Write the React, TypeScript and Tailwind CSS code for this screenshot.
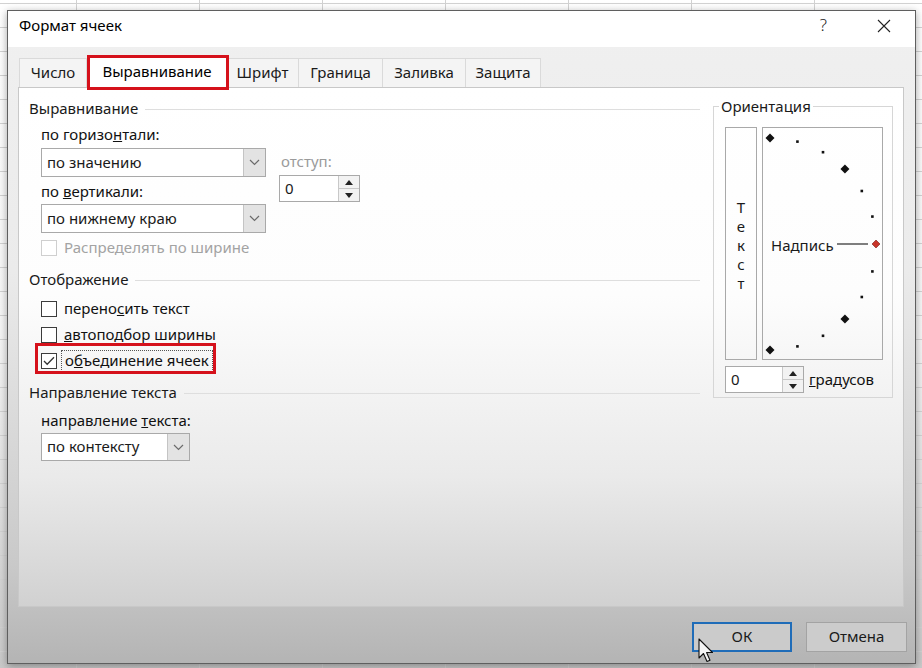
import React from "react";

function Chevron() {
  return (
    <svg width="11" height="7" viewBox="0 0 11 7">
      <polyline points="1,1 5.5,5.5 10,1" fill="none" stroke="#6b6b6b" strokeWidth="1.2" />
    </svg>
  );
}

function Select({ className, text }: { className: string; text: string }) {
  return (
    <div className={"flex border border-[#a9a9a9] bg-white " + className}>
      <div className="flex-1 flex items-center pl-[5px] pb-[2px] text-[#1a1a1a]">{text}</div>
      <div className="w-[22px] flex items-center justify-center bg-[#e3e3e3] border-l border-[#c4c4c4]">
        <Chevron />
      </div>
    </div>
  );
}

function Spin({ className }: { className: string }) {
  return (
    <div className={"flex border border-[#a9a9a9] bg-white " + className}>
      <div className="flex-1 flex items-center pl-[5px] pb-[2px] text-[#1a1a1a]">0</div>
      <div className="w-[21px] flex flex-col border-l border-[#c8c8c8] bg-[#f2f2f2]">
        <div className="flex-1 flex items-center justify-center border-b border-[#c8c8c8]">
          <svg width="8" height="5" viewBox="0 0 8 5">
            <polygon points="0,5 4,0 8,5" fill="#222" />
          </svg>
        </div>
        <div className="flex-1 flex items-center justify-center">
          <svg width="8" height="5" viewBox="0 0 8 5">
            <polygon points="0,0 8,0 4,5" fill="#222" />
          </svg>
        </div>
      </div>
    </div>
  );
}

function Header({ children }: { children: React.ReactNode }) {
  return (
    <div className="flex items-center h-[20px] text-[#1a1a1a]">
      <span className="-mt-[3px]">{children}</span>
      <div className="flex-1 h-px bg-[#dedede] ml-[7px]" />
    </div>
  );
}

function Check({ checked, disabled }: { checked?: boolean; disabled?: boolean }) {
  return (
    <div
      className={
        "w-[16px] h-[16px] border bg-white flex items-center justify-center shrink-0 " +
        (disabled ? "border-[#cfcfcf]" : "border-[#3c3c3c]")
      }
    >
      {checked && (
        <svg width="12" height="10" viewBox="0 0 12 10">
          <polyline points="1,5 4.2,8.3 11,1.2" fill="none" stroke="#333" strokeWidth="1.3" />
        </svg>
      )}
    </div>
  );
}

function Dial() {
  const cx = 7;
  const cy = 116;
  const r = 106;
  const items: { a: number; kind: "d" | "p" | "r" }[] = [
    { a: 90, kind: "d" },
    { a: 75, kind: "p" },
    { a: 60, kind: "p" },
    { a: 45, kind: "d" },
    { a: 30, kind: "p" },
    { a: 15, kind: "p" },
    { a: 0, kind: "r" },
    { a: -15, kind: "p" },
    { a: -30, kind: "p" },
    { a: -45, kind: "d" },
    { a: -60, kind: "p" },
    { a: -75, kind: "p" },
    { a: -90, kind: "d" },
  ];
  return (
    <svg width="119" height="231" viewBox="0 0 119 231" className="absolute left-0 top-0">
      <line x1="74" y1="116" x2="105" y2="116" stroke="#3a3a3a" strokeWidth="1.3" />
      {items.map((it, i) => {
        const rad = (it.a * Math.PI) / 180;
        const x = cx + r * Math.cos(rad);
        const y = cy - r * Math.sin(rad);
        if (it.kind === "p") {
          return <rect key={i} x={x - 1.3} y={y - 1.3} width="2.6" height="2.6" fill="#111" />;
        }
        const h = it.kind === "r" ? 4 : 4.5;
        return (
          <polygon
            key={i}
            points={`${x},${y - h} ${x + h},${y} ${x},${y + h} ${x - h},${y}`}
            fill={it.kind === "r" ? "#c8352a" : "#111"}
            stroke={it.kind === "r" ? "#7a1d16" : "none"}
            strokeWidth="0.6"
          />
        );
      })}
    </svg>
  );
}

export default function App() {
  const tabs = [
    { t: "Число", w: "w-[68px]" },
    { t: "Выравнивание", w: "w-[140px]", sel: true },
    { t: "Шрифт", w: "w-[73px]" },
    { t: "Граница", w: "w-[85px]" },
    { t: "Заливка", w: "w-[84px]" },
    { t: "Защита", w: "w-[76px]" },
  ];
  return (
    <div className="relative w-[922px] h-[668px] overflow-hidden bg-[linear-gradient(to_bottom,#ffffff_0%,#f6f6f6_50%,#c9c9c9_100%)]">
      <div className="absolute inset-0 bg-[linear-gradient(to_right,#d2d2d2_1px,transparent_1px),linear-gradient(to_bottom,#d2d2d2_1px,transparent_1px)] bg-[size:123px_24px] bg-[position:76px_3px]" />
      <div className="relative pt-[10px] pl-[7px] font-['Noto_Sans',sans-serif] text-[15px] leading-[20px] text-[#111]">
        <div className="w-[909px] h-[654px] border border-[#5f5f5f] shadow-[0_2px_8px_rgba(0,0,0,0.35)] flex flex-col bg-[linear-gradient(to_bottom,#f0f0f0_0%,#ebebeb_40%,#c9c9c9_85%,#b4b4b4_100%)]">
          {/* title bar */}
          <div className="h-[36px] bg-white flex items-start pt-[4px] pl-[11px] pr-[24px] shrink-0">
            <span className="text-[15px] text-[#000]">Формат ячеек</span>
            <span className="ml-auto text-[17px] text-[#222] font-light leading-[20px]">?</span>
            <svg width="14" height="14" viewBox="0 0 14 14" className="ml-[50px] mt-[4px]">
              <path d="M1 1 L13 13 M13 1 L1 13" stroke="#222" strokeWidth="1.1" />
            </svg>
          </div>
          {/* tabs */}
          <div className="pt-[8px] pl-[12px] flex items-end h-[40px] shrink-0 relative z-10">
            {tabs.map((tb, i) =>
              tb.sel ? (
                <div
                  key={i}
                  className={
                    tb.w +
                    " h-[33px] -mb-px pb-[2px] bg-white border border-b-0 border-[#d4d4d4] flex items-center justify-center text-[#000]"
                  }
                >
                  {tb.t}
                </div>
              ) : (
                <div
                  key={i}
                  className={
                    tb.w +
                    " h-[29px] pb-[2px] bg-[#f4f4f4] border border-b-0 border-[#dadada] -ml-px flex items-center justify-center text-[#1a1a1a]"
                  }
                >
                  {tb.t}
                </div>
              )
            )}
          </div>
          {/* panel */}
          <div className="ml-[10px] w-[886px] h-[520px] shrink-0 border border-[#c8c8c8] flex bg-[linear-gradient(to_bottom,#ffffff_0%,#fdfdfd_40%,#eaeaea_75%,#d1d1d1_100%)]">
            {/* left column */}
            <div className="w-[694px] pl-[10px] pr-[13px] pt-[11px] flex flex-col">
              <Header>Выравнивание</Header>
              <div className="mt-[5px] pl-[12px] flex">
                <div className="w-[225px] flex flex-col">
                  <div className="h-[20px]">
                    по горизо<u>н</u>тали:
                  </div>
                  <Select className="mt-[4px] h-[29px] w-[225px]" text="по значению" />
                  <div className="mt-[4px] h-[20px]">
                    по <u>в</u>ертикали:
                  </div>
                  <Select className="mt-[3px] h-[29px] w-[225px]" text="по нижнему краю" />
                </div>
                <div className="ml-[13px] w-[81px] flex flex-col">
                  <div className="mt-[27px] h-[20px] pl-[2px] text-[#9a9a9a]">отступ:</div>
                  <Spin className="mt-[4px] h-[27px] w-[81px]" />
                </div>
              </div>
              <div className="mt-[6px] pl-[12px] h-[18px] flex items-center">
                <Check disabled />
                <span className="ml-[7px] -mt-[2px] text-[#a3a3a3]">Распределять по ширине</span>
              </div>
              <div className="mt-[13px]">
                <Header>Отображение</Header>
              </div>
              <div className="mt-[6px] pl-[12px] flex flex-col">
                <div className="h-[26px] flex items-center">
                  <Check />
                  <span className="ml-[7px] -mt-[2px]">
                    перено<u>с</u>ить текст
                  </span>
                </div>
                <div className="h-[26px] flex items-center">
                  <Check />
                  <span className="ml-[7px] -mt-[2px]">
                    <u>а</u>втоподбор ширины
                  </span>
                </div>
                <div className="h-[26px] flex items-center">
                  <Check checked />
                  <span className="ml-[4px] px-[3px] border border-dotted border-[#555] leading-[18px] pb-[2px]">
                    о<u>б</u>ъединение ячеек
                  </span>
                </div>
              </div>
              <div className="mt-[9px]">
                <Header>Направление текста</Header>
              </div>
              <div className="mt-[7px] pl-[12px] h-[20px]">
                направление <u>т</u>екста:
              </div>
              <div className="pl-[12px]">
                <Select className="mt-[3px] h-[28px] w-[149px]" text="по контексту" />
              </div>
            </div>
            {/* orientation */}
            <fieldset className="mt-[8px] w-[180px] h-[302px] border border-[#d6d6d6] pl-[11px] pr-[9px] pt-[11px] pb-[4px] self-start">
              <legend className="-ml-[6px] px-[2px] h-[20px] text-[#1a1a1a]">Ориентация</legend>
              <div className="flex gap-[5px] h-[233px]">
                <div className="w-[32px] border border-[#a9a9a9] flex flex-col items-center justify-center pt-[4px] leading-[19px] text-[#1a1a1a]">
                  <span>Т</span>
                  <span>е</span>
                  <span>к</span>
                  <span>с</span>
                  <span>т</span>
                </div>
                <div className="w-[121px] border border-[#a9a9a9] relative">
                  <Dial />
                  <span className="absolute left-[8px] top-[107px] text-[#1a1a1a]">Надпись</span>
                </div>
              </div>
              <div className="mt-[6px] flex items-center">
                <Spin className="h-[27px] w-[79px]" />
                <span className="ml-[5px] -mt-[2px]">
                  <u>г</u>радусов
                </span>
              </div>
            </fieldset>
          </div>
          {/* buttons */}
          <div className="flex justify-end gap-[14px] pr-[8px] mt-[15px]">
            <div className="w-[100px] h-[30px] pb-[2px] border-2 border-[#1f6cb8] bg-[#cbcbcb] flex items-center justify-center text-[#1a1a1a]">
              ОК
            </div>
            <div className="w-[101px] h-[30px] pb-[2px] border border-[#a3a3a3] bg-[#cccccc] flex items-center justify-center text-[#1a1a1a]">
              Отмена
            </div>
          </div>
        </div>
      </div>
      {/* annotation boxes */}
      <div className="absolute z-20 left-[87px] top-[55px] w-[142px] h-[35px] border-[3px] border-[#d5111b]" />
      <div className="absolute z-20 left-[35px] top-[343px] w-[181px] h-[31px] border-[3px] border-[#d5111b]" />
      {/* cursor */}
      <svg width="16" height="26" viewBox="0 0 16 26" className="absolute z-20 left-[698px] top-[638px]">
        <path
          d="M1 1 L1 20 L5.5 15.5 L9 23.5 L12 22.2 L8.6 14.5 L14.5 14.5 Z"
          fill="#f4f4f4"
          stroke="#111"
          strokeWidth="1.1"
          strokeLinejoin="round"
        />
      </svg>
    </div>
  );
}
